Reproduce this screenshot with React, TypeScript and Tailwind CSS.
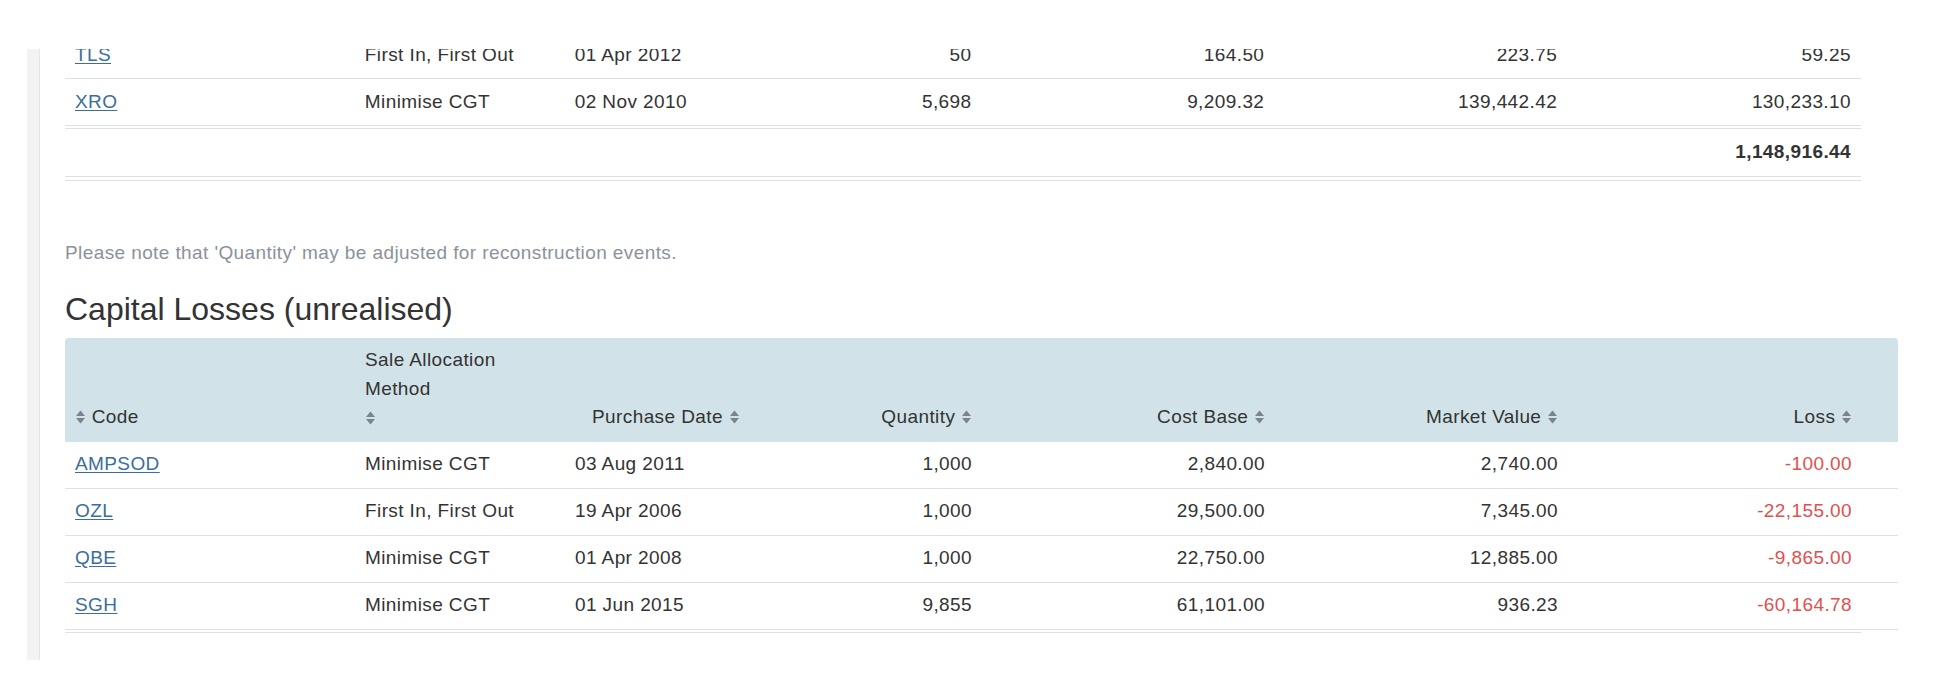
const font = { fontFamily: '"Liberation Sans", Arial, sans-serif' }

function Sort() {
  return (
    <svg width="11" height="16" viewBox="0 0 11 16" className="inline-block align-[-2px]">
      <path d="M1 7 L5.5 1.5 L10 7 Z" fill="#7d838a" />
      <path d="M1 9 L5.5 14.5 L10 9 Z" fill="#7d838a" />
    </svg>
  )
}

const cols = ['w-[290px]', 'w-[210px]', 'w-[215px]', 'w-[202px]', 'w-[293px]', 'w-[293px]', 'w-[294px]']

const gains = [
  ['TLS', 'First In, First Out', '01 Apr 2012', '50', '164.50', '223.75', '59.25'],
  ['XRO', 'Minimise CGT', '02 Nov 2010', '5,698', '9,209.32', '139,442.42', '130,233.10'],
]

const losses = [
  ['AMPSOD', 'Minimise CGT', '03 Aug 2011', '1,000', '2,840.00', '2,740.00', '-100.00'],
  ['OZL', 'First In, First Out', '19 Apr 2006', '1,000', '29,500.00', '7,345.00', '-22,155.00'],
  ['QBE', 'Minimise CGT', '01 Apr 2008', '1,000', '22,750.00', '12,885.00', '-9,865.00'],
  ['SGH', 'Minimise CGT', '01 Jun 2015', '9,855', '61,101.00', '936.23', '-60,164.78'],
]

function Row({ r, red }: { r: string[]; red?: boolean }) {
  return (
    <div className="flex h-[47px] items-center border-b border-[#dde1e4]">
      {r.map((c, i) => (
        <div key={i} className={`${cols[i]} px-[10px] whitespace-nowrap ${i >= 3 ? 'text-right' : ''}`}>
          {i === 0 ? (
            <a className="text-[#3b6e9c] underline underline-offset-2">{c}</a>
          ) : (
            <span className={red && i === 6 ? 'text-[#e05050]' : ''}>{c}</span>
          )}
        </div>
      ))}
    </div>
  )
}

export default function App() {
  return (
    <div className="h-[694px] bg-white text-[19px] tracking-[0.4px] text-[#333]" style={font}>
      <div className="ml-[27px] flex pt-[49px]">
        <div className="w-[13px] h-[611px] bg-[#f3f3f3] border-r border-[#e6e6e6]" />
        <div className="ml-[25px] h-[611px] overflow-hidden">
          <div className="-mt-[17px] w-[1796px]">
            {gains.map((r) => <Row key={r[0]} r={r} />)}
            <div className="border-t border-[#dde1e4] mt-[2px]" />
            <div className="flex h-[47px] items-center justify-end px-[10px] font-bold">1,148,916.44</div>
            <div className="border-t border-[#dde1e4]" />
            <div className="border-t border-[#dde1e4] mt-[3px]" />
          </div>
          <p className="mt-[58px] text-[#8b929a]">Please note that 'Quantity' may be adjusted for reconstruction events.</p>
          <h2 className="mt-[22px] text-[32px] tracking-normal leading-[38px] text-[#333]">Capital Losses (unrealised)</h2>
          <div className="mt-[10px] w-[1833px]">
            <div className="flex h-[104px] items-end pb-[10px] bg-[#d1e3e8] rounded-t-sm">
              <div className={`${cols[0]} px-[10px]`}><Sort /> Code</div>
              <div className={`${cols[1]} px-[10px] leading-[29px]`}>Sale Allocation<br />Method<br /><Sort /></div>
              <div className={`${cols[2]} pl-[27px] whitespace-nowrap`}>Purchase Date <Sort /></div>
              <div className={`${cols[3]} px-[10px] text-right`}>Quantity <Sort /></div>
              <div className={`${cols[4]} px-[10px] text-right`}>Cost Base <Sort /></div>
              <div className={`${cols[5]} px-[10px] text-right`}>Market Value <Sort /></div>
              <div className={`${cols[6]} px-[10px] text-right`}>Loss <Sort /></div>
            </div>
            {losses.map((r) => <Row key={r[0]} r={r} red />)}
            <div className="w-[1796px] border-t border-[#dde1e4] mt-[2px]" />
          </div>
        </div>
      </div>
    </div>
  )
}
